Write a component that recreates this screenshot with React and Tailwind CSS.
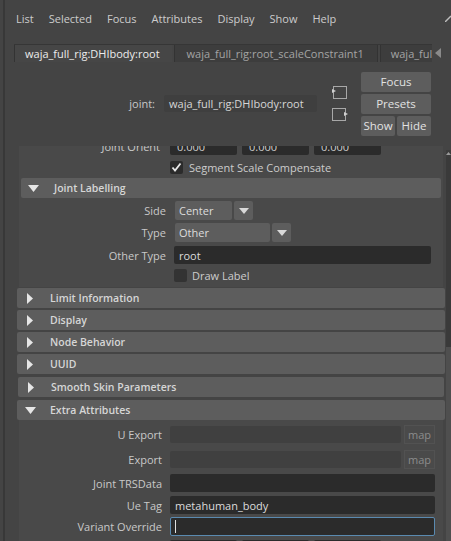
import React from "react";

const Tri = ({ down }) =>
  down ? (
    <svg width="11" height="7" viewBox="0 0 11 7" className="shrink-0">
      <polygon points="0,0 11,0 5.5,7" fill="#e6e6e6" />
    </svg>
  ) : (
    <svg width="6" height="11" viewBox="0 0 6 11" className="shrink-0">
      <polygon points="0,0 6,5.5 0,11" fill="#e6e6e6" />
    </svg>
  );

const Header = ({ title, down, cls = "ml-[12px] w-[428px]", triPl = "pl-[10px]", textMl = "ml-[17px]" }) => (
  <div className={`${cls} h-[20px] bg-[#5d5d5d] rounded-[2px] flex items-center ${triPl}`}>
    <Tri down={down} />
    <span className={`${textMl} font-semibold text-[10.5px] text-[#d6d6d6]`}>{title}</span>
  </div>
);

const Check = ({ checked }) => (
  <div className="w-[13px] h-[13px] bg-[#2b2b2b] rounded-[2px] flex items-center justify-center shrink-0">
    {checked && (
      <svg width="11" height="10" viewBox="0 0 11 10">
        <polyline points="1.5,5.5 4,8.5 9.5,1.5" fill="none" stroke="#e8e8e8" strokeWidth="1.8" />
      </svg>
    )}
  </div>
);

export default function App() {
  return (
    <div className="w-[451px] h-[541px] bg-[#444444] overflow-hidden flex text-[11px] leading-none text-[#c8c8c8] font-['Open_Sans',sans-serif]">
      <div className="w-[3px] bg-[#444444] shrink-0" />
      <div className="w-[2px] bg-[#383838] shrink-0" />
      <div className="flex-1 flex flex-col relative">
        {/* menu */}
        <div className="h-[36px] flex items-center pl-[11px] gap-[15px] text-[#cccccc] shrink-0">
          <span>List</span>
          <span>Selected</span>
          <span>Focus</span>
          <span>Attributes</span>
          <span>Display</span>
          <span>Show</span>
          <span>Help</span>
        </div>
        <svg width="6" height="8" viewBox="0 0 6 8" className="absolute right-0 top-[14px]">
          <line x1="0" y1="8" x2="6" y2="2" stroke="#bdbdbd" strokeWidth="1.4" />
        </svg>
        {/* tabs */}
        <div className="mt-[8px] h-[18px] flex items-stretch pl-[9px] shrink-0">
          <div className="w-[418px] overflow-hidden flex border-t border-[#363636]">
            <div className="pl-[10px] pr-[12px] bg-[#464646] border-l border-[#333333] flex items-center text-[#ececec] shrink-0">
              waja_full_rig:DHIbody:root
            </div>
            <div className="ml-[2px] pl-[12px] pr-[13px] bg-[#3d3d3d] border-x border-[#333333] flex items-center text-[#a4a4a4] shrink-0">
              waja_full_rig:root_scaleConstraint1
            </div>
            <div className="ml-[2px] px-[10px] bg-[#3d3d3d] border-l border-[#333333] flex items-center text-[#a4a4a4] shrink-0">
              waja_full_rig:DHIbody
            </div>
          </div>
          <div className="ml-[3px] flex items-center">
            <svg width="6" height="10" viewBox="0 0 6 10">
              <polygon points="6,0 0,5 6,10" fill="#8a8a8a" />
            </svg>
          </div>
        </div>
        {/* header */}
        <div className="h-[84px] flex items-center justify-end pr-[20px] pb-[1px] shrink-0">
          <span className="text-[#c8c8c8]">joint:</span>
          <div className="ml-[9px] w-[153px] h-[17px] bg-[#3f3f3f] rounded-[2px] flex items-center pl-[5px] text-[#d6d6d6]">
            waja_full_rig:DHIbody:root
          </div>
          <div className="ml-[15px] w-[16px] flex flex-col gap-[9px]">
            <svg width="16" height="13" viewBox="0 0 16 13">
              <rect x="1.5" y="0.5" width="13" height="12" fill="none" stroke="#a8a8a8" />
              <polygon points="0,3 4,5 0,7" fill="#d0d0d0" />
            </svg>
            <svg width="16" height="13" viewBox="0 0 16 13">
              <rect x="0.5" y="0.5" width="13" height="12" fill="none" stroke="#a8a8a8" />
              <polygon points="12,4 16,6 12,8" fill="#d0d0d0" />
            </svg>
          </div>
          <div className="ml-[13px] w-[70px] flex flex-col gap-[2px] text-[#e2e2e2] text-[11.5px]">
            <div className="h-[20px] bg-[#5d5d5d] rounded-[2px] flex items-center justify-center">Focus</div>
            <div className="h-[20px] bg-[#5d5d5d] rounded-[2px] flex items-center justify-center">Presets</div>
            <div className="flex gap-[2px]">
              <div className="h-[20px] flex-1 bg-[#5d5d5d] rounded-[2px] flex items-center justify-center">Show</div>
              <div className="h-[20px] flex-1 bg-[#5d5d5d] rounded-[2px] flex items-center justify-center">Hide</div>
            </div>
          </div>
        </div>
        {/* scroll area */}
        <div className="flex-1 flex overflow-hidden">
          <div className="flex-1 flex flex-col overflow-hidden">
            {/* joint section */}
            <div className="ml-[14px] w-[424px] bg-[#494949] mt-[-8px] pb-[5px] flex flex-col">
              <div className="h-[17px] flex items-center">
                <div className="w-[147px] text-right pr-[6px] text-[#c8c8c8]">Joint Orient</div>
                <div className="ml-[4px] flex gap-[5px]">
                  <div className="w-[67px] h-[17px] bg-[#2b2b2b] rounded-[2px] pl-[7px] flex items-center text-[#cfcfcf]">0.000</div>
                  <div className="w-[67px] h-[17px] bg-[#2b2b2b] rounded-[2px] pl-[7px] flex items-center text-[#cfcfcf]">0.000</div>
                  <div className="w-[67px] h-[17px] bg-[#2b2b2b] rounded-[2px] pl-[7px] flex items-center text-[#cfcfcf]">0.000</div>
                </div>
              </div>
              <div className="mt-[5px] h-[14px] flex items-center pl-[151px]">
                <Check checked />
                <span className="ml-[6px] text-[#cccccc]">Segment Scale Compensate</span>
              </div>
              {/* joint labelling */}
              <div className="mt-[4px] mx-[2px] flex flex-col">
                <Header title="Joint Labelling" down cls="w-full" triPl="pl-[7px]" textMl="ml-[15px]" />
                <div className="mt-[3px] h-[19px] flex items-center">
                  <div className="w-[145px] text-right">Side</div>
                  <div className="ml-[9px] flex gap-[2px]">
                    <div className="w-[57px] h-[19px] bg-[#5d5d5d] rounded-[2px] pl-[4px] flex items-center text-[#dcdcdc]">Center</div>
                    <div className="w-[19px] h-[19px] bg-[#5d5d5d] rounded-[2px] flex items-center justify-center">
                      <svg width="10" height="6" viewBox="0 0 10 6"><polygon points="0,0 10,0 5,6" fill="#d8d8d8" /></svg>
                    </div>
                  </div>
                </div>
                <div className="mt-[3px] h-[19px] flex items-center">
                  <div className="w-[145px] text-right">Type</div>
                  <div className="ml-[9px] flex gap-[2px]">
                    <div className="w-[95px] h-[19px] bg-[#5d5d5d] rounded-[2px] pl-[4px] flex items-center text-[#dcdcdc]">Other</div>
                    <div className="w-[19px] h-[19px] bg-[#5d5d5d] rounded-[2px] flex items-center justify-center">
                      <svg width="10" height="6" viewBox="0 0 10 6"><polygon points="0,0 10,0 5,6" fill="#d8d8d8" /></svg>
                    </div>
                  </div>
                </div>
                <div className="mt-[4px] h-[18px] flex items-center">
                  <div className="w-[145px] text-right">Other Type</div>
                  <div className="ml-[8px] w-[257px] h-[18px] bg-[#2b2b2b] rounded-[2px] pl-[5px] flex items-center text-[#dcdcdc]">root</div>
                </div>
                <div className="mt-[5px] h-[13px] flex items-center pl-[153px]">
                  <div className="w-[13px] h-[13px] bg-[#333333] rounded-[2px]" />
                  <span className="ml-[5px] text-[#cccccc]">Draw Label</span>
                </div>
              </div>
            </div>
            <div className="mt-[1px] flex flex-col gap-[2px]">
              <Header title="Limit Information" />
              <Header title="Display" />
              <Header title="Node Behavior" />
              <Header title="UUID" />
              <div className="mt-[1px]">
                <Header title="Smooth Skin Parameters" cls="ml-[13px] w-[426px]" />
              </div>
              <div className="mt-[1px]">
                <Header title="Extra Attributes" down triPl="pl-[8px]" textMl="ml-[14px]" />
              </div>
            </div>
            {/* extra attributes */}
            <div className="ml-[14px] w-[424px] bg-[#494949] flex-1 flex flex-col pt-[5px]">
              <div className="h-[18px] flex items-center">
                <div className="w-[143px] text-right">U Export</div>
                <div className="ml-[8px] w-[231px] h-[17px] bg-[#404040] rounded-[2px]" />
                <div className="ml-[3px] w-[31px] h-[19px] bg-[#4a4a4a] border border-[#525252] flex items-center justify-center text-[#8c8c8c]">map</div>
              </div>
              <div className="mt-[7px] h-[18px] flex items-center">
                <div className="w-[143px] text-right">Export</div>
                <div className="ml-[8px] w-[231px] h-[17px] bg-[#404040] rounded-[2px]" />
                <div className="ml-[3px] w-[31px] h-[19px] bg-[#4a4a4a] border border-[#525252] flex items-center justify-center text-[#8c8c8c]">map</div>
              </div>
              <div className="mt-[6px] h-[18px] flex items-center">
                <div className="w-[143px] text-right">Joint TRSData</div>
                <div className="ml-[8px] w-[265px] h-[18px] bg-[#2b2b2b] rounded-[2px]" />
              </div>
              <div className="mt-[4px] h-[18px] flex items-center">
                <div className="w-[143px] text-right">Ue Tag</div>
                <div className="ml-[8px] w-[265px] h-[18px] bg-[#2b2b2b] rounded-[2px] pl-[5px] flex items-center text-[#dcdcdc]">metahuman_body</div>
              </div>
              <div className="mt-[3px] h-[19px] flex items-center">
                <div className="w-[143px] text-right">Variant Override</div>
                <div className="ml-[8px] w-[265px] h-[19px] bg-[#2b2b2b] rounded-[2px] border border-[#5a8ab0] pl-[4px] flex items-center">
                  <div className="w-[1px] h-[13px] bg-[#e0e0e0]" />
                </div>
              </div>
              <div className="mt-[4px] h-[17px] flex items-center">
                <div className="w-[143px]" />
                <div className="ml-[8px] flex gap-[5px]">
                  <div className="w-[67px] h-[17px] bg-[#2b2b2b] rounded-[2px]" />
                  <div className="w-[67px] h-[17px] bg-[#2b2b2b] rounded-[2px]" />
                  <div className="w-[67px] h-[17px] bg-[#2b2b2b] rounded-[2px]" />
                </div>
              </div>
            </div>
          </div>
          {/* scrollbar */}
          <div className="w-[5px] flex flex-col mt-[4px] shrink-0">
            <div className="h-[7px] bg-[#3c3c3c] flex items-start justify-center pt-[2px]">
              <svg width="5" height="3" viewBox="0 0 5 3"><polygon points="0,3 2.5,0 5,3" fill="#9a9a9a" /></svg>
            </div>
            <div className="h-[190px] bg-[#3a3a3a]" />
            <div className="flex-1 bg-[#4f4f4f]" />
          </div>
        </div>
      </div>
    </div>
  );
}
